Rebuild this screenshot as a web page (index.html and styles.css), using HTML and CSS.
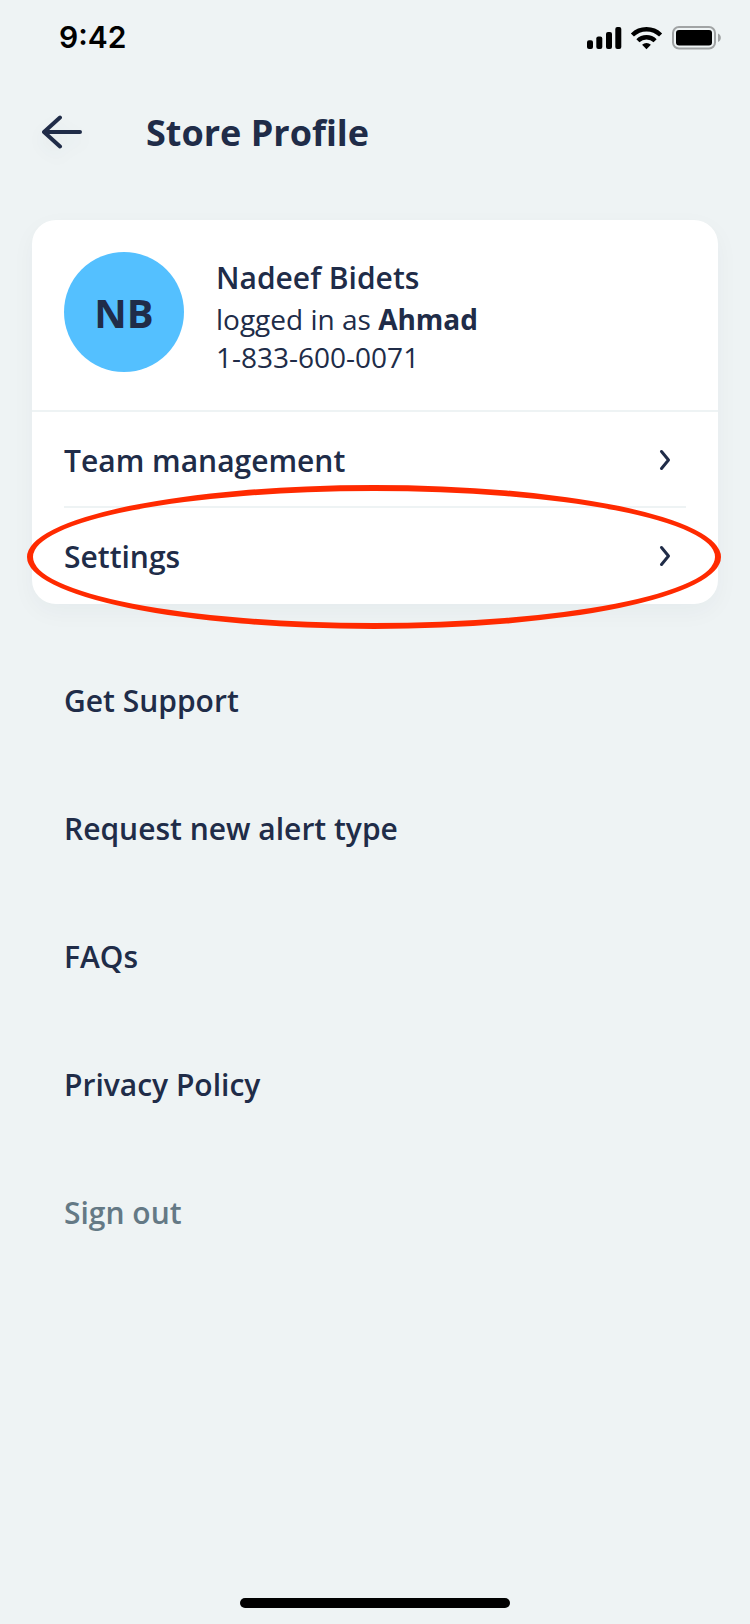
FILE: index.html
```html
<!DOCTYPE html>
<html lang="en">
<head>
  <meta charset="UTF-8">
  <meta name="viewport" content="width=device-width, initial-scale=1.0">
  <title>Store Profile</title>
  <link rel="stylesheet" href="styles.css">
</head>
<body>

  <div class="status-bar">
    <span class="time">9:42</span>
    <svg class="status-icons" width="136" height="24" viewBox="0 0 136 24">
      <!-- signal -->
      <rect x="1" y="14.3" width="6" height="8.7" rx="2"/>
      <rect x="10.3" y="10.5" width="6" height="12.5" rx="2"/>
      <rect x="20" y="6" width="6" height="17" rx="2"/>
      <rect x="29.3" y="1" width="6" height="22" rx="2"/>
      <!-- wifi -->
      <g fill="none" stroke="#000" stroke-width="4.4">
        <path d="M46.4 9a20.2 20.2 0 0 1 28.2 0"/>
        <path d="M51.9 14.8a12.2 12.2 0 0 1 17.2 0"/>
      </g>
      <path d="M60.5 23.2l-4.4-4.5a6.4 6.4 0 0 1 8.8 0z"/>
      <!-- battery -->
      <rect x="87" y="1" width="42" height="21.5" rx="6" fill="none" stroke="#a0a3a4" stroke-width="2"/>
      <rect x="90" y="4" width="36" height="15.5" rx="3"/>
      <path d="M132 7.5c3.8 1.6 3.8 6.9 0 8.5z" fill="#a0a3a4"/>
    </svg>
  </div>

  <header class="header">
    <svg class="back" width="42" height="34" viewBox="0 0 42 34">
      <path d="M19 2.5L3 17l16 14.5M3 17h36"/>
    </svg>
    <h1>Store Profile</h1>
  </header>

  <div class="card">
    <div class="profile">
      <div class="avatar">NB</div>
      <div class="info">
        <p class="name">Nadeef Bidets</p>
        <p>logged in as <b>Ahmad</b></p>
        <p>1-833-600-0071</p>
      </div>
    </div>
    <div class="row">
      <span>Team management</span>
      <svg class="chevron" width="12" height="22" viewBox="0 0 12 22"><path d="M2.5 2.5L9.5 11l-7 8.5"/></svg>
    </div>
    <div class="row">
      <span>Settings</span>
      <svg class="chevron" width="12" height="22" viewBox="0 0 12 22"><path d="M2.5 2.5L9.5 11l-7 8.5"/></svg>
    </div>
    <div class="highlight"></div>
  </div>

  <ul class="menu">
    <li>Get Support</li>
    <li>Request new alert type</li>
    <li>FAQs</li>
    <li>Privacy Policy</li>
    <li class="sign-out">Sign out</li>
  </ul>

  <div class="home-indicator"></div>

</body>
</html>
```
FILE: styles.css
```css
* {
  box-sizing: border-box;
}
body {
  margin: 0;
  height: 1624px;
  display: flex;
  flex-direction: column;
  background-color: #eef3f4;
  color: #202c48;
  font-family: "Open Sans", sans-serif;
  font-size: 30px;
}
.status-bar {
  height: 88px;
  padding: 26px 28px 0 59px;
  display: flex;
  justify-content: space-between;
}
.time {
  color: #000;
  font-family: Inter, sans-serif;
  font-size: 30px;
  line-height: 23px;
  font-weight: 560;
}
.header {
  height: 132px;
  padding: 0 41px;
  display: flex;
  align-items: flex-start;
}
.back {
  margin: 27px 63px 0 0;
  fill: none;
  stroke: #202c48;
  stroke-width: 4;
  stroke-linecap: round;
  stroke-linejoin: round;
  overflow: visible;
  filter: drop-shadow(0 8px 8px rgba(32, 44, 72, 0.06));
}
h1 {
  margin: 21px 0 0;
  font-size: 36px;
  line-height: 48px;
  font-weight: 700;
}
.card {
  position: relative;
  margin: 0 32px;
  height: 384px;
  border-radius: 24px;
  background-color: #fff;
  box-shadow: 0 8px 24px rgba(32, 44, 72, 0.04);
}
.profile {
  height: 192px;
  padding: 32px;
  display: flex;
  border-bottom: 2px solid #eef3f4;
}
.avatar {
  width: 120px;
  height: 120px;
  margin-right: 32px;
  border-radius: 50%;
  background-color: #54c0ff;
  font-size: 40px;
  line-height: 122px;
  font-weight: 700;
  text-align: center;
}
.info {
  padding-top: 4px;
}
.info p {
  margin: 0;
  font-size: 28px;
  line-height: 38px;
}
.info .name {
  font-size: 30px;
  line-height: 43px;
  font-weight: 600;
  margin-bottom: 1px;
}
.row {
  height: 96px;
  margin: 0 32px;
  padding-right: 15px;
  display: flex;
  justify-content: space-between;
  line-height: 98px;
  font-weight: 600;
}
.row + .row {
  box-shadow: 0 -2px #eef3f4;
}
.chevron {
  margin-top: 37px;
  fill: none;
  stroke: #202c48;
  stroke-width: 3;
  stroke-linecap: round;
  stroke-linejoin: round;
}
.highlight {
  position: absolute;
  left: -5px;
  top: 265px;
  width: 694px;
  height: 144px;
  border: 6px solid #ff2a00;
  border-radius: 50%;
}
.menu {
  margin: 32px 64px 0;
  padding: 0;
  list-style: none;
  font-weight: 600;
}
.menu li {
  height: 128px;
  line-height: 130px;
}
.menu .sign-out {
  color: #647985;
}
.home-indicator {
  width: 270px;
  height: 10px;
  margin: auto auto 16px;
  border-radius: 5px;
  background-color: #000;
}
```
